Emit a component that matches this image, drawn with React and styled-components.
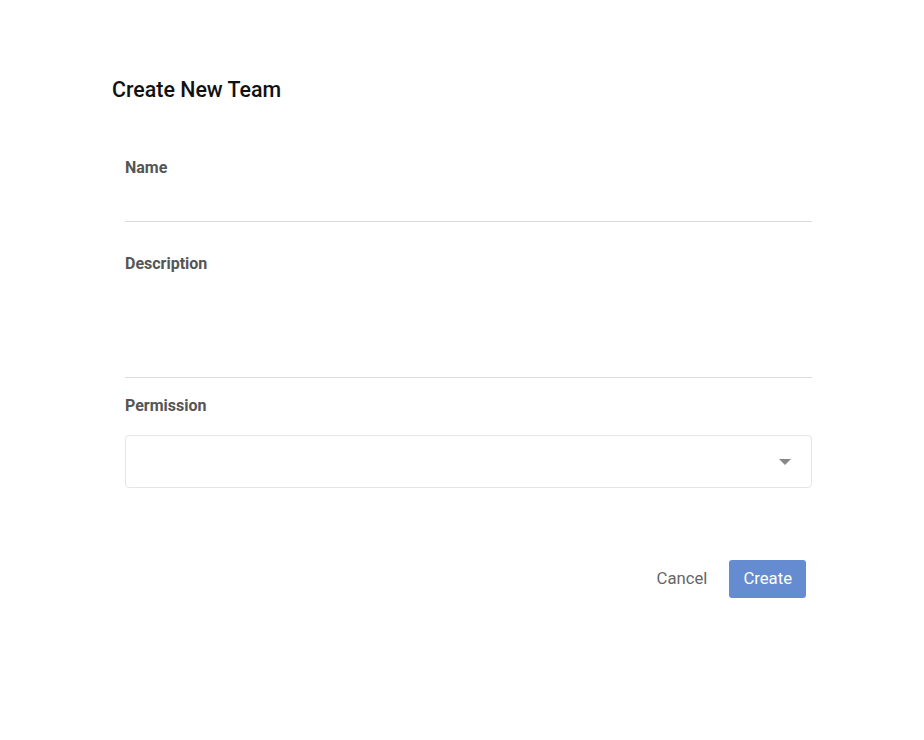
import React from "react";
import styled, { createGlobalStyle } from "styled-components";

const Global = createGlobalStyle`
  html, body { margin: 0; padding: 0; background: #fff; }
  body { font-family: Roboto, "Noto Sans", sans-serif; }
  * { box-sizing: border-box; }
`;

const Page = styled.div`
  padding: 76px 112px 0 112px;
  width: 924px;
`;

const Title = styled.h2`
  margin: 0;
  font-size: 21.4px;
  line-height: 28px;
  font-weight: 500;
  color: #111;
`;

const Form = styled.form`
  display: flex;
  flex-direction: column;
  padding-left: 13px;
`;

const Field = styled.div`
  display: flex;
  flex-direction: column;
  margin-top: ${(p) => p.$top}px;
`;

const Label = styled.label`
  font-size: 16px;
  line-height: 22px;
  font-weight: 700;
  color: #555;
`;

const LineInput = styled.input`
  margin-top: 6px;
  height: 37px;
  border: none;
  border-bottom: 1px solid #dcdcdc;
  outline: none;
  font: inherit;
  padding: 0;
`;

const LineArea = styled.textarea`
  margin-top: 6px;
  height: 97px;
  border: none;
  border-bottom: 1px solid #dcdcdc;
  outline: none;
  resize: none;
  font: inherit;
  padding: 0;
`;

const SelectBox = styled.div`
  margin-top: 18px;
  height: 53px;
  border: 1px solid #e6e6e6;
  border-radius: 4px;
  display: flex;
  align-items: center;
  justify-content: flex-end;
  padding-right: 20px;
`;

const Actions = styled.div`
  margin-top: 72px;
  display: flex;
  justify-content: flex-end;
  align-items: center;
  gap: 12px;
  padding-right: 6px;
`;

const Button = styled.button`
  height: 38px;
  padding: 0 ${(p) => (p.$primary ? 14 : 10)}px 1px;
  border: none;
  border-radius: 3px;
  font-family: inherit;
  font-size: 16.7px;
  background: ${(p) => (p.$primary ? "#658bd0" : "transparent")};
  color: ${(p) => (p.$primary ? "#fff" : "#666")};
  cursor: pointer;
`;

export default function App() {
  return (
    <>
      <Global />
      <Page>
        <Title>Create New Team</Title>
        <Form onSubmit={(e) => e.preventDefault()}>
          <Field $top={53}>
            <Label>Name</Label>
            <LineInput />
          </Field>
          <Field $top={31}>
            <Label>Description</Label>
            <LineArea />
          </Field>
          <Field $top={17}>
            <Label>Permission</Label>
            <SelectBox>
              <svg width="12" height="6" viewBox="0 0 12 6">
                <path d="M0 0 L12 0 L6 6 Z" fill="#888" />
              </svg>
            </SelectBox>
          </Field>
          <Actions>
            <Button type="button">Cancel</Button>
            <Button type="button" $primary>Create</Button>
          </Actions>
        </Form>
      </Page>
    </>
  );
}
